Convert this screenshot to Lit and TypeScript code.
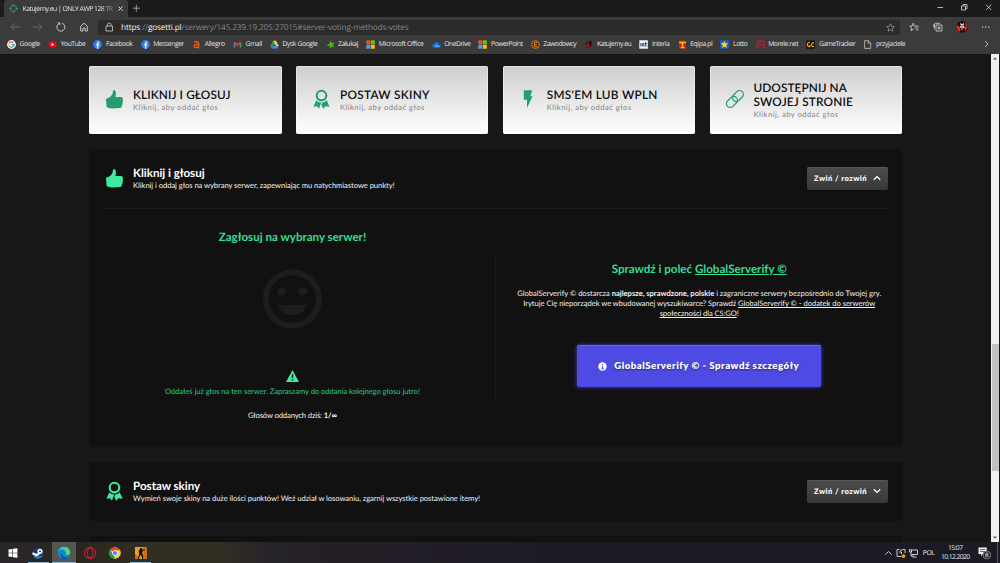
import { LitElement, html, css, svg } from "lit";
import { customElement, property } from "lit/decorators.js";

// One line of text, tracked so that it takes exactly `width` pixels
@customElement("fit-text")
export class FitText extends LitElement {
  @property({ type: Number }) width = 0;

  static styles = css`
    :host {
      display: block;
      width: max-content;
      white-space: nowrap;
    }
  `;

  firstUpdated() {
    this.style.letterSpacing = "0px";
    const range = document.createRange();
    range.selectNodeContents(this);
    const natural = range.getBoundingClientRect().width;
    const count = (this.textContent ?? "").length;
    this.style.letterSpacing = `${(this.width - natural) / count}px`;
  }

  render() {
    return html`<slot></slot>`;
  }
}

const thumb = svg`<path fill="currentColor" d="M0 9.6Q0 8.4 1.2 8.2C4 7.6 6.6 5 6.8 2.2C7 .4 7.8-.4 8.6 0C10.3 1.4 10.2 4.2 9.4 6.9L15.2 7C16.8 7.2 17.3 8.8 16.6 9.9C17.2 10.8 17.1 12 16.4 12.7C16.9 13.7 16.6 14.8 15.9 15.3C16.2 16.9 15.3 17.9 14 18L6 18.5C3.5 18.5 2 17.9 .6 17.1Z"/>`;

const award = svg`
  <circle cx="8.5" cy="5.6" r="4.8" fill="none" stroke="currentColor" stroke-width="2.1"/>
  <path fill="currentColor" d="M3.3 10.2Q5 12.4 8.2 12.6L6 18.8L4.2 16.3L.4 16.8Z M13.7 10.2Q12 12.4 9.2 12.6L8.4 15L10.2 18.8L12.5 16.3L16.6 16.8Z"/>`;

const bolt = svg`<path fill="currentColor" d="M4.8.2H13.2L11.3 6.3H13.6L8 18V9.8H4.8Z"/>`;

const link = svg`
  <g fill="none" stroke="currentColor" stroke-width="1.3" transform="rotate(-45 8.9 9)">
    <rect x="-1.5" y="5.2" width="12.4" height="7.6" rx="3.8"/>
    <rect x="6.9" y="5.2" width="12.4" height="7.6" rx="3.8"/>
  </g>`;

const cards = [
  { icon: thumb, lines: [["KLIKNIJ I GŁOSUJ", 97.5]] },
  { icon: award, lines: [["POSTAW SKINY", 90]] },
  { icon: bolt, lines: [["SMS'EM LUB WPLN", 111]] },
  { icon: link, lines: [["UDOSTĘPNIJ NA", 93.5], ["SWOJEJ STRONIE", 99.5]] },
];

const msGrid = svg`
  <path fill="#f25022" d="M.3.3h4v4h-4z"/><path fill="#7fba00" d="M4.8.3h4v4h-4z"/>
  <path fill="#3fa0f0" d="M.3 4.8h4v4h-4z"/><path fill="#ffb900" d="M4.8 4.8h4v4h-4z"/>`;

const facebook = svg`
  <circle cx="4.5" cy="4.5" r="4.4" fill="#2f7bf0"/>
  <path d="M6.3 2.2H5.7Q4.7 2.2 4.7 3.3V8.8M3.2 4.9H6.2" fill="none" stroke="#fff" stroke-width="1.2"/>`;

const bookmarks = [
  {
    label: "Google", width: 20.5, icon: svg`
      <circle cx="4.5" cy="4.5" r="4.4" fill="#fff"/>
      <g fill="none" stroke-width="1.3">
        <path stroke="#ea4335" d="M2.2 3.3A2.6 2.6 0 0 1 6.4 2.7"/>
        <path stroke="#fbbc05" d="M2.2 3.3A2.6 2.6 0 0 0 2.2 5.8"/>
        <path stroke="#34a853" d="M2.2 5.8A2.6 2.6 0 0 0 6.2 6.5"/>
        <path stroke="#4285f4" d="M6.2 6.5Q7.1 5.7 7.1 4.6H4.6"/>
      </g>`,
  },
  { label: "YouTube", width: 24.5, icon: svg`<rect x=".8" y="1.6" width="7.6" height="5.8" rx="1.3" fill="#f00612"/><path fill="#fff" d="M3.6 3.1L6 4.5L3.6 5.9z"/>` },
  { label: "Facebook", width: 26.5, icon: facebook },
  { label: "Messenger", width: 30.8, icon: facebook },
  { label: "Allegro", width: 20.2, icon: svg`<path d="M2 2.1Q6.6.9 6.6 3.2V8.2M6.4 4.5H3.8Q2.2 4.6 2.2 6T3.8 7.5H6.4" fill="none" stroke="#f25a1c" stroke-width="1.5"/>` },
  { label: "Gmail", width: 16.2, icon: svg`<path fill="#4285f4" d="M.7 2h1.6v5.6H.7z"/><path fill="#34a853" d="M6.7 3h1.6v4.6H6.7z"/><path d="M1.3 2.3L4.5 4.9L7.7 2.3" fill="none" stroke="#ea4335" stroke-width="1.7"/>` },
  { label: "Dysk Google", width: 35, icon: svg`<path fill="#1ea362" d="M3.1.8L.3 6L1.9 8.4L4.8 3.5z"/><path fill="#ffcd40" d="M3.1.8H6L8.8 5.9H5.9z"/><path fill="#4285f4" d="M3.2 5.9H8.8L7.3 8.4H1.8z"/>` },
  { label: "Załukaj", width: 20, icon: svg`<path fill="#49b817" d="M4.8.3L5.8 3L8.6 2.8L7 5L8.5 7.3L5.7 6.8L4 8.8L3.5 6L.5 5.3L3.2 3.8z"/>` },
  { label: "Microsoft Office", width: 44.7, icon: msGrid },
  { label: "OneDrive", width: 26.2, icon: svg`<path fill="#1f6fe0" d="M2 7.3Q.2 7.1.3 5.5T2.3 3.7Q3 1.7 4.9 2T7.1 4.1Q8.9 4.3 8.9 5.8T7.3 7.3z"/><path fill="#4fa6f5" d="M1.5 7.3L4.6 4.5L8.3 6.9Q7.8 7.3 7.3 7.3z"/>` },
  { label: "PowerPoint", width: 31.5, icon: msGrid },
  { label: "Zawodowcy", width: 33, icon: svg`<circle cx="4.5" cy="4.5" r="3.9" fill="none" stroke="#d9791c" stroke-width=".9"/><path d="M6.2 2.5H3.5V6.5H6.2M3.5 4.5H5.7" fill="none" stroke="#d9791c"/>` },
  { label: "Katujemy.eu", width: 34.3, icon: svg`<path fill="#0c0506" d="M1.5 4Q4 .5 7.5 1.5L7.2 6.5L3 8Z"/><path fill="#a80f1c" d="M2 5.7Q2.2 3 5.7 2.3L5.2 5.1L6.8 5.9L4.2 7.8Q2 7.6 2 5.7"/>` },
  { label: "Interia", width: 17.5, icon: svg`<path fill="#f4f6fb" d="M.3.3h8.5v8.4H.3z"/><path d="M1.9 3V6.5M3.4 6.5V3.7H5V6.5M6.7 2.1V6.2H7.6M5.8 3.5H7.7" fill="none" stroke="#1a2e6b" stroke-width=".9"/>` },
  { label: "Eqipa.pl", width: 22.2, icon: svg`<path fill="#d71b18" d="M1 .5h7v8H1z"/><path d="M1.2 2.5H7.9M4.5 2V7.7M2.7 7.6H6.5" stroke="#ffc51d" stroke-width="1.4"/>` },
  { label: "Lotto", width: 14.5, icon: svg`<path fill="#1e61c5" d="M.2.3h8.7v8.4H.2z"/><path fill="#ffd91c" d="M4.4.8L5.5 3.2L8.2 3.4L6.2 5.2L6.9 7.9L4.5 6.5L2.1 7.8L2.7 5.1L.8 3.3L3.4 3.1z"/>` },
  { label: "Morele.net", width: 30, icon: svg`<path d="M1.3 8.5V2.6Q1.3 1.3 2.6 1.3H6.7Q8 1.3 8 2.6V6.8Q8 8 6.6 8M3.4 6.5V4.1M5.8 6.5V4.1M3.3 4.1H6" fill="none" stroke="#dd101d" stroke-width="1.4"/>` },
  { label: "GameTracker", width: 36.3, icon: svg`<path fill="#120d08" d="M.3.5h8.4v8.2H.3z"/><path d="M4 2.5Q1.5 1.8 1.5 4.4T3.8 6.7V4.9M8 2.9Q5.6 2.5 5.6 4.7T8 6.7" fill="none" stroke="#f5a81c" stroke-width="1.2"/>` },
  { label: "przyjaciele", width: 29.3, icon: svg`<path d="M1.6.7H5.3L7.7 3V8.4H1.6ZM5.2.8V3.1H7.6" fill="none" stroke="#c4c4c4" stroke-width=".8"/>` },
];

@customElement("browser-chrome")
export class BrowserChrome extends LitElement {
  static styles = css`
    :host {
      display: block;
      height: 54px;
      font-family: "Open Sans", "Noto Sans", sans-serif;
      font-size: 6.8px;
      font-weight: 500;
      color: #e4e4e4;
      background: #3b3b3b;
    }
    svg {
      display: block;
      flex: none;
      overflow: visible;
    }
    .tabs {
      display: flex;
      height: 17px;
      padding-left: 4px;
      background: #1b1b1b;
    }
    .tab {
      display: flex;
      align-items: center;
      width: 124px;
      box-sizing: border-box;
      padding: 0 5px 1px 5px;
      background: #3b3b3b;
      border-radius: 3px 3px 0 0;
    }
    .tab-title {
      margin: 0 5px 0 4.5px;
      -webkit-mask-image: linear-gradient(90deg, #000 86%, rgba(0, 0, 0, 0.3));
    }
    .plus {
      margin: 4px 0 0 4px;
    }
    .window {
      display: flex;
      margin: 2px 8.5px 0 auto;
    }
    .toolbar {
      display: flex;
      align-items: center;
      height: 20px;
    }
    .nav {
      display: flex;
      gap: 13px;
      width: 88.5px;
      padding-left: 9.5px;
    }
    .address {
      display: flex;
      align-items: center;
      width: 802px;
      height: 15px;
      box-sizing: border-box;
      padding: 0 5px 0 7px;
      border-radius: 2px;
      background: #2b2b2b;
      font-size: 8.2px;
      color: #858585;
    }
    .address fit-text {
      margin: 0 auto 0 8px;
    }
    .address b {
      font-weight: 500;
      color: #f4f4f4;
    }
    .tools {
      display: flex;
      gap: 13.6px;
      margin-left: 9px;
      align-items: center;
    }
    .bookmarks {
      display: flex;
      align-items: center;
      height: 14px;
      padding: 0 11px 0 7px;
    }
    .bookmark {
      display: flex;
      align-items: center;
      gap: 3.6px;
      margin-right: 8.1px;
    }
    .bookmark fit-text {
      margin-top: -1px;
    }
    .bookmarks > svg {
      margin-left: auto;
    }
  `;

  render() {
    return html`
      <div class="tabs">
        <div class="tab">
          <svg width="9" height="9" fill="none" stroke="#249a68">
            <circle cx="4.5" cy="4.5" r="3.1" /><path d="M4.5 0V2.5M4.5 6.5V9M0 4.5H2.5M6.5 4.5H9" />
          </svg>
          <fit-text class="tab-title" width="90">Katujemy.eu | ONLY AWP 128 TR</fit-text>
          <svg width="5" height="5" stroke="#ddd"><path d="M.5.5L4.5 4.5M4.5.5L.5 4.5" /></svg>
        </div>
        <svg class="plus" width="8" height="8" stroke="#b5b5b5" stroke-width=".8"><path d="M4.3.7V7.7M.8 4.2H7.8" /></svg>
        <svg class="window" width="56" height="12" fill="none" stroke="#ddd" stroke-width=".8">
          <path d="M1.5 5.5H7M25.5 4H29.5V8H25.5ZM27 4V2.5H31V6.7H29.6M50 2.7L55.2 7.9M55.2 2.7L50 7.9" />
        </svg>
      </div>
      <div class="toolbar">
        <div class="nav">
          <svg width="10" height="10" fill="none" stroke="#727272" stroke-width=".8"><path d="M10 5H1.2M5 1.2L1.2 5L5 8.8" /></svg>
          <svg width="10" height="10" fill="none" stroke="#727272" stroke-width=".8"><path d="M0 5H8.8M5 1.2L8.8 5L5 8.8" /></svg>
          <svg width="10" height="10" fill="none" stroke="#d5d5d5" stroke-width=".9"><path d="M3.2 1.5A4 4 0 1 0 6 1.3M1.7.8H3.8V3" /></svg>
          <svg width="10" height="10" fill="none" stroke="#d5d5d5" stroke-width=".9"><path d="M1.7 4.2L5 1.2L8.3 4.2V9H6.2V6H4V9H1.7Z" /></svg>
        </div>
        <div class="address">
          <svg width="8" height="10" fill="none" stroke="#d0d0d0" stroke-width=".8"><path d="M1 4H7.5V9H1ZM2.4 4V2.3Q2.6 1 4.2 1T6.1 2.3V4" /></svg>
          <fit-text width="287.5"><b>https</b>://<b>gosetti.pl</b>/serwery/145.239.19.205:27015#server-voting-methods-votes</fit-text>
          <svg width="9" height="9" fill="none" stroke="#a0a0a0" stroke-width=".7"><path d="M4.5.7L5.6 3.3L8.4 3.5L6.3 5.4L6.9 8.2L4.5 6.7L2.1 8.2L2.7 5.4L.6 3.5L3.4 3.3Z" /></svg>
        </div>
        <div class="tools">
          <svg width="10" height="10" fill="none" stroke="#d5d5d5" stroke-width=".8"><path d="M5 4H9.5M6 6H9.5M7 8H9.5M5.3 4L4.2 1.2L3.1 4L.8 4.1L2.6 5.9L2 8.6L5 6.8" /></svg>
          <svg width="10" height="10" fill="none" stroke="#d5d5d5" stroke-width=".8"><path d="M3 3H9V9H3ZM6 4V8M4 6H8M1.5 7V2.5Q1.5 1.3 2.6 1.3H7M.8 5V2" /></svg>
          <svg width="12" height="12">
            <circle cx="6" cy="6" r="5.8" fill="#210507" />
            <path d="M1 3.5Q-.5 8 3.5 11L4.5 9L2.5 5ZM8.5 1Q12 3 11.3 7L9 10.5L8.3 7L10 5Z" fill="#e32b22" />
            <path d="M4 2L6 3L8 2L7.6 5L9 7L7 7L6 10L5 7L3 6.5L4.8 5Z" fill="#e8d6d0" />
            <path d="M4.6 4.5H5.5M6.5 4.5H7.4M6 5.5V8" stroke="#250606" stroke-width=".8" />
          </svg>
          <svg width="10" height="10" fill="#ddd"><circle cx=".6" cy="5" r=".7" /><circle cx="3.7" cy="5" r=".7" /><circle cx="6.8" cy="5" r=".7" /></svg>
        </div>
      </div>
      <div class="bookmarks">
        ${bookmarks.map(
          (b) => html`
            <div class="bookmark">
              <svg width="9" height="9">${b.icon}</svg>
              <fit-text width=${b.width}>${b.label}</fit-text>
            </div>
          `
        )}
        <svg width="5" height="8" fill="none" stroke="#bbb"><path d="M1 1L4 4L1 7" /></svg>
      </div>
    `;
  }
}

@customElement("vote-page")
export class VotePage extends LitElement {
  static styles = css`
    :host {
      display: flex;
      height: 488px;
      overflow: hidden;
      background: #171717;
      color: #f2f2f2;
      font-family: Lato, "Open Sans", sans-serif;
      font-size: 7.6px;
    }
    svg {
      display: block;
      flex: none;
      overflow: visible;
    }
    .content {
      flex: 1;
      padding: 11.6px 89px 0 89.4px;
    }
    .cards {
      display: grid;
      grid-template-columns: repeat(4, 1fr);
      gap: 14.6px;
    }
    .card {
      display: flex;
      align-items: center;
      gap: 9.2px;
      height: 68.8px;
      box-sizing: border-box;
      padding: 0 0 1px 16.5px;
      border-radius: 2px;
      background: linear-gradient(#cecece, #fff);
      box-shadow: inset 0 0 0 1px rgba(255, 255, 255, 0.45);
      color: #259e6d;
    }
    .card-text {
      padding-top: 2px;
    }
    .card-title {
      font-size: 11.8px;
      font-weight: 600;
      line-height: 14.5px;
      color: #0e0e0e;
    }
    .card-sub {
      margin-top: -1px;
      line-height: 11px;
      color: #858585;
    }
    .panel {
      margin-top: 14.4px;
      padding: 0 15px;
      border-radius: 3px;
      background: #111;
    }
    .head {
      display: flex;
      align-items: center;
      gap: 9.2px;
      height: 59.5px;
      padding-left: 1.5px;
      color: #3fe9a0;
    }
    .panel:nth-of-type(2) .head {
      height: 59px;
      border-bottom: 1px solid #1c1c1c;
    }
    .head-text {
      padding-top: 1.5px;
      color: #f2f2f2;
    }
    .head-title {
      font-size: 11.6px;
      font-weight: 700;
      line-height: 13px;
      color: #fff;
    }
    .head-sub {
      margin-top: -0.5px;
      line-height: 11px;
    }
    .toggle {
      display: flex;
      align-items: center;
      gap: 5.5px;
      width: 81px;
      height: 23px;
      margin: 0 -0.5px 0 auto;
      padding: 0 0 0 7.5px;
      box-sizing: border-box;
      border-radius: 2px;
      background: linear-gradient(#4c4c4c, #383838);
      box-shadow: inset 0 1px 0 #565656;
      color: #f5f5f5;
      font-weight: 800;
    }
    .body {
      display: grid;
      grid-template-columns: 376px 1px 1fr;
      column-gap: 15px;
      height: 238.5px;
    }
    .col {
      display: flex;
      flex-direction: column;
      align-items: center;
    }
    .left {
      padding-top: 21.3px;
    }
    .right {
      padding-top: 53px;
    }
    .rule {
      height: 147px;
      margin-top: 46.5px;
      background: #1b1b1b;
    }
    .heading {
      font-size: 11.6px;
      font-weight: 700;
      line-height: 16px;
      color: #35dd95;
    }
    .smile {
      margin: 22.7px 0 41px;
    }
    .done {
      margin-top: 4px;
      line-height: 11px;
      color: #2cc983;
    }
    .count {
      margin-top: 13px;
      line-height: 11px;
    }
    .about {
      display: flex;
      flex-direction: column;
      align-items: center;
      margin-top: 10.5px;
      line-height: 10px;
    }
    u {
      text-underline-offset: 1px;
      text-decoration-thickness: 1px;
    }
    .cta {
      display: flex;
      align-items: center;
      gap: 7px;
      width: 244px;
      height: 42px;
      margin-top: 26.4px;
      padding: 1px 0 0 21px;
      box-sizing: border-box;
      border-radius: 2px;
      background: #4e4be4;
      box-shadow: 0 0 4px #4441c4, inset 0 1px 0 #6866ee;
      color: #fff;
      font-size: 9.6px;
      font-weight: 800;
      text-shadow: 0 1px 2px rgba(0, 0, 0, 0.5);
    }
    .cta fit-text {
      padding-top: 1px;
    }
    .peek {
      height: 60px;
    }
    .scroll {
      display: flex;
      flex-direction: column;
      justify-content: space-between;
      align-items: center;
      width: 8px;
      margin-right: 1px;
      background: #f1f1f1;
    }
    .track {
      width: 7px;
      height: 127px;
      margin-top: 221px;
      background: #c1c1c1;
    }
  `;

  toggle(open: boolean) {
    return html`
      <div class="toggle">
        <fit-text width="53">Zwiń / rozwiń</fit-text>
        <svg width="8" height="6" fill="none" stroke="#fff" stroke-width="1.3">
          <path d=${open ? "M.8 4.8L4 1.6L7.2 4.8" : "M.8 1.2L4 4.4L7.2 1.2"} />
        </svg>
      </div>
    `;
  }

  head(icon: unknown, title: string, titleWidth: number, sub: string, subWidth: number, open: boolean) {
    return html`
      <div class="head">
        <svg width="18" height="19">${icon}</svg>
        <div class="head-text">
          <fit-text class="head-title" width=${titleWidth}>${title}</fit-text>
          <fit-text class="head-sub" width=${subWidth}>${sub}</fit-text>
        </div>
        ${this.toggle(open)}
      </div>
    `;
  }

  render() {
    return html`
      <div class="content">
        <div class="cards">
          ${cards.map(
            (card) => html`
              <div class="card">
                <svg width="18" height="19">${card.icon}</svg>
                <div class="card-text">
                  ${card.lines.map(([text, width]) => html`<fit-text class="card-title" width=${width}>${text}</fit-text>`)}
                  <fit-text class="card-sub" width="85">Kliknij, aby oddać głos</fit-text>
                </div>
              </div>
            `
          )}
        </div>
        <div class="panel">
          ${this.head(thumb, "Kliknij i głosuj", 71.5, "Kliknij i oddaj głos na wybrany serwer, zapewniając mu natychmiastowe punkty!", 261.5, true)}
          <div class="body">
            <div class="col left">
              <fit-text class="heading" width="147.5">Zagłosuj na wybrany serwer!</fit-text>
              <svg class="smile" width="60" height="60">
                <circle cx="30.3" cy="30" r="26.7" fill="none" stroke="#1d1d1d" stroke-width="5.8" />
                <g fill="#1d1d1d">
                  <circle cx="19.8" cy="22.3" r="4.4" /><circle cx="40.8" cy="22.3" r="4.4" />
                  <path d="M15.6 36H45Q40.8 46.3 30.3 46.3T15.6 36Z" />
                </g>
              </svg>
              <svg width="13" height="12">
                <path fill="#3fe9a0" d="M6.5 0L13 12H0Z" />
                <path d="M6.5 4.2V8M6.5 9V10.4" stroke="#111" stroke-width="1.4" />
              </svg>
              <fit-text class="done" width="255">Oddałeś już głos na ten serwer. Zapraszamy do oddania kolejnego głosu jutro!</fit-text>
              <fit-text class="count" width="89">Głosów oddanych dziś: <b>1/∞</b></fit-text>
            </div>
            <div class="rule"></div>
            <div class="col right">
              <fit-text class="heading" width="175">Sprawdź i poleć <u>GlobalServerify ©</u></fit-text>
              <div class="about">
                <fit-text width="364">GlobalServerify © dostarcza <b>najlepsze, sprawdzone, polskie</b> i zagraniczne serwery bezpośrednio do Twojej gry.</fit-text>
                <fit-text width="352">Irytuje Cię nieporządek we wbudowanej wyszukiwarce? Sprawdź <u>GlobalServerify © - dodatek do serwerów</u></fit-text>
                <fit-text width="79"><u>społeczności dla CS:GO</u>!</fit-text>
              </div>
              <div class="cta">
                <svg width="9" height="9">
                  <circle cx="4.5" cy="4.5" r="4.2" fill="#fff" />
                  <path d="M4.5 2V3.2M4.5 4V7M3.5 6.8H5.6" stroke="#4e4be4" stroke-width="1.1" />
                </svg>
                <fit-text width="185">GlobalServerify © - Sprawdź szczegóły</fit-text>
              </div>
            </div>
          </div>
        </div>
        <div class="panel">
          ${this.head(award, "Postaw skiny", 67, "Wymień swoje skiny na duże ilości punktów! Weź udział w losowaniu, zgarnij wszystkie postawione itemy!", 347, false)}
        </div>
        <div class="panel peek"></div>
      </div>
      <div class="scroll">
        <svg width="8" height="8"><path fill="#555" d="M2 5.5H6L4 3.2Z" /></svg>
        <div class="track"></div>
        <svg width="8" height="10"><path fill="#555" d="M2 4.5H6L4 6.8Z" /></svg>
      </div>
    `;
  }
}

const apps = [
  {
    state: "", icon: svg`<path fill="#fff" d="M1.5 2.4L5.2 1.9V5.7H1.5ZM5.8 1.8L10.4 1.2V5.7H5.8ZM1.5 6.3H5.2V10.1L1.5 9.6ZM5.8 6.3H10.4V10.8L5.8 10.2Z"/>`,
  },
  {
    state: "running", icon: svg`
      <circle cx="6" cy="6" r="5.7" fill="#123a68"/><path fill="#1e79b8" d="M.8 8.5Q6 9 11 8.5Q9.5 11.7 6 11.7T.8 8.5"/>
      <circle cx="8" cy="4.3" r="1.8" fill="#123a68" stroke="#fff" stroke-width="1.6"/>
      <path d="M.5 6.1L4.4 8.2L7.2 6.3" fill="none" stroke="#fff" stroke-width="2.2"/>`,
  },
  {
    state: "running active", icon: svg`
      <circle cx="6" cy="6" r="6.2" fill="#1682d5"/>
      <path fill="#35c4c7" d="M0 4.8Q1.4-.2 6-.2Q9.3-.2 11 2L8 5Q3-.5 0 4.8"/>
      <path fill="#5bd66e" d="M7.5.1Q12.5 1.8 12.2 6Q11.6 8.3 8.7 8.1Q7 7.6 8 6.5Q8.6 4 6.7 2.6Z"/>
      <path fill="#0c539f" d="M4.2 5.3Q3 9.6 7.3 10.5Q9.3 10.7 10.8 9.8Q8.5 13 4.8 12Q1.5 9.5 4.2 5.3"/>`,
  },
  { state: "", icon: svg`<g fill="none" stroke="#c41c38" stroke-width="1.1"><circle cx="6" cy="6" r="5.6"/><ellipse cx="6" cy="6" rx="2.6" ry="4.8"/></g>` },
  {
    state: "", icon: svg`
      <circle cx="6" cy="6" r="5.8" fill="#ffcd40"/>
      <path fill="#e34133" d="M6 6L1 3Q2.8.2 6 .2T11.1 3.2H6Z"/>
      <path fill="#16a05d" d="M1 3L5 8.5L5.8 11.8Q1 11.4.2 6.5Q.2 4.3 1 3"/>
      <circle cx="6" cy="6" r="2.7" fill="#fff"/><circle cx="6" cy="6" r="2.1" fill="#4285f4"/>`,
  },
  {
    state: "running", icon: svg`
      <path fill="#eda02a" d="M0 0H12V12H0Z"/><path fill="#c7701c" d="M8 0H12V12H9ZM0 7L3 9V12H0Z"/>
      <path fill="#15130f" d="M5.3 1H7L7.3 2.7L10 2.3V3.1L7.7 4L7.2 6.3L8.3 8.6V12H7.1L6.6 9L5.1 7.8L4 12H2.8L4.1 7L3.7 4.2Z"/>`,
  },
];

@customElement("task-bar")
export class TaskBar extends LitElement {
  static styles = css`
    :host {
      display: flex;
      align-items: center;
      height: 21px;
      box-sizing: border-box;
      padding-left: 0.5px;
      font-family: "Open Sans", "Noto Sans", sans-serif;
      font-size: 6.8px;
      line-height: 9px;
      color: #e8e8e8;
      background: linear-gradient(90deg, #29262b 0, #29251f 75px, #332e22 150px, #332e22 220px, #27232a 270px, #241f27 330px, #1d1a24 600px, #1c1b24);
    }
    svg {
      display: block;
      overflow: visible;
    }
    .app {
      display: flex;
      align-items: center;
      justify-content: center;
      width: 24px;
      height: 21px;
      box-sizing: border-box;
      margin-right: 1.7px;
    }
    .running {
      background: linear-gradient(#84b8df, #84b8df) bottom / 21px 1.5px no-repeat;
    }
    .active {
      background: linear-gradient(#84b8df, #84b8df) bottom / 24px 1.5px no-repeat, #555650;
    }
    .tray {
      display: flex;
      align-items: center;
      margin-left: auto;
    }
    .lang {
      margin: 0 6.5px 0 7px;
    }
    .clock {
      display: flex;
      flex-direction: column;
      align-items: center;
      margin-top: -1px;
    }
    .note {
      margin: 0 6px 0 8.5px;
    }
    .edge {
      width: 1px;
      height: 21px;
      margin-right: 2px;
      background: #55545b;
    }
    .badge {
      font-size: 6px;
    }
  `;

  render() {
    return html`
      ${apps.map((app) => html`<div class="app ${app.state}"><svg width="12" height="12">${app.icon}</svg></div>`)}
      <div class="tray">
        <svg width="32" height="12" fill="none" stroke="#ddd" stroke-width=".9">
          <path d="M1.5 7.5L4.5 4.5L7.5 7.5M15.5 2.5H13V9.5H17.5M15 5H17.5V7M16 4L18.5 2.5H21V6M26.5 3H33.5V7.5H27.5M28.5 10H32.5M25.5 2V5H27.5V2.5M27 5V9H30" />
          <circle cx="19.5" cy="9.1" r="1.9" fill="#ff9500" stroke="none" />
        </svg>
        <fit-text class="lang" width="11.8">POL</fit-text>
        <div class="clock">
          <fit-text width="14.5">15:07</fit-text>
          <fit-text width="28.5">10.12.2020</fit-text>
        </div>
        <svg class="note" width="13" height="13">
          <path fill="#f0f0f0" d="M.5 1.5H8.7V8H5L3 10V8H.5Z" />
          <path d="M2 3.5H7.3M2 5.5H7.3" stroke="#333" stroke-width=".7" />
          <circle cx="8.8" cy="9" r="3.9" fill="#2c2b30" stroke="#8d8d8d" stroke-width=".8" />
          <text class="badge" x="7.1" y="11.1" fill="#eee">8</text>
        </svg>
        <div class="edge"></div>
      </div>
    `;
  }
}

@customElement("app-root")
export class AppRoot extends LitElement {
  static styles = css`
    :host {
      display: block;
      width: 1000px;
      height: 563px;
      overflow: hidden;
      background: #171717;
      text-rendering: geometricPrecision;
    }
  `;

  render() {
    return html`
      <browser-chrome></browser-chrome>
      <vote-page></vote-page>
      <task-bar></task-bar>
    `;
  }
}
